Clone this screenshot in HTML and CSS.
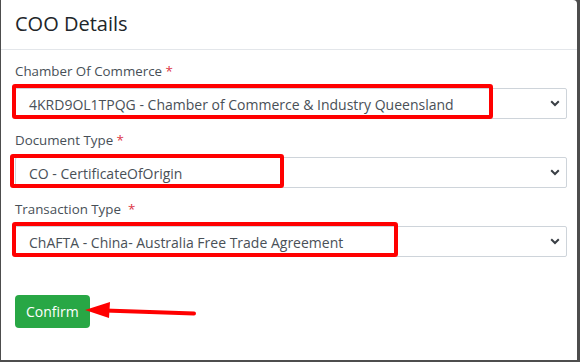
FILE: index.html
```html
<!DOCTYPE html>
<html>
<head>
<meta charset="utf-8">
<link rel="stylesheet" href="styles.css">
</head>
<body>
<div class="modal">
  <div class="modal-header">
    <h5 class="modal-title">COO Details</h5>
  </div>
  <div class="modal-body">
    <div class="form-group">
      <label class="label">Chamber Of Commerce <span class="req">*</span></label>
      <div class="select">
        <span class="value">4KRD9OL1TPQG - Chamber of Commerce &amp; Industry Queensland</span>
        <svg class="chev" width="10" height="7" viewBox="0 0 10 7"><path d="M1.2 1.3 L5 5 L8.8 1.3" fill="none" stroke="#3a3f45" stroke-width="2"/></svg>
      </div>
    </div>
    <div class="form-group">
      <label class="label">Document Type <span class="req">*</span></label>
      <div class="select">
        <span class="value">CO - CertificateOfOrigin</span>
        <svg class="chev" width="10" height="7" viewBox="0 0 10 7"><path d="M1.2 1.3 L5 5 L8.8 1.3" fill="none" stroke="#3a3f45" stroke-width="2"/></svg>
      </div>
    </div>
    <div class="form-group">
      <label class="label">Transaction Type &nbsp;<span class="req">*</span></label>
      <div class="select">
        <span class="value">ChAFTA - China- Australia Free Trade Agreement</span>
        <svg class="chev" width="10" height="7" viewBox="0 0 10 7"><path d="M1.2 1.3 L5 5 L8.8 1.3" fill="none" stroke="#3a3f45" stroke-width="2"/></svg>
      </div>
    </div>
    <div class="actions">
      <button class="btn-confirm">Confirm</button>
    </div>
  </div>
  <div class="mark mark-1"></div>
  <div class="mark mark-2"></div>
  <div class="mark mark-3"></div>
  <svg class="arrow" width="120" height="24" viewBox="0 0 120 24">
    <line x1="20" y1="10.5" x2="109" y2="13.5" stroke="#ff0000" stroke-width="4" stroke-linecap="round"/>
    <polygon points="0,10 25,2 24,18" fill="#ff0000"/>
  </svg>
</div>
</body>
</html>
```

FILE: styles.css
```css
html, body {
  margin: 0;
  padding: 0;
}
body {
  background: #4d4d4d;
  width: 580px;
  height: 362px;
  overflow: hidden;
  font-family: "Open Sans", "Liberation Sans", sans-serif;
}
.modal {
  position: relative;
  margin-left: 1px;
  width: 576px;
  height: 360px;
  background: #ffffff;
  border-top-right-radius: 4px;
  box-sizing: border-box;
}
.modal-header {
  padding: 9px 15px 10px 14px;
  border-bottom: 1px solid #e3e6ea;
}
.modal-title {
  margin: 0;
  font-size: 20px;
  line-height: 30px;
  font-weight: 500;
  color: #212529;
}
.modal-body {
  padding: 11px 10px 0 14px;
}
.form-group {
  margin-bottom: 11px;
}
.label {
  display: block;
  font-size: 13.33px;
  line-height: 20px;
  margin-bottom: 7px;
  font-weight: 500;
  color: #474f57;
}
.req {
  color: #dc3545;
}
.select {
  height: 31px;
  box-sizing: border-box;
  border: 1px solid #ced4da;
  border-radius: 2px;
  padding: 0 6px 0 13px;
  display: flex;
  align-items: center;
  justify-content: space-between;
  font-size: 14px;
  color: #495057;
}
.value {
  line-height: 21px;
  padding-top: 1px;
}
.chev {
  display: block;
}
.actions {
  margin-top: 38px;
}
.btn-confirm {
  font-family: "Open Sans", "Liberation Sans", sans-serif;
  font-size: 14px;
  line-height: 21px;
  padding: 6px 11px;
  border: 0;
  border-radius: 4px;
  background: #28a745;
  color: #ffffff;
}
.mark {
  position: absolute;
  border: 4px solid #ff0000;
  border-radius: 3px;
  box-sizing: border-box;
}
.mark-1 {
  left: 11px;
  top: 84px;
  width: 481px;
  height: 35px;
}
.mark-2 {
  left: 9px;
  top: 154px;
  width: 274px;
  height: 34px;
}
.mark-3 {
  left: 11px;
  top: 222px;
  width: 386px;
  height: 35px;
}
.arrow {
  position: absolute;
  left: 84px;
  top: 300px;
}
```
